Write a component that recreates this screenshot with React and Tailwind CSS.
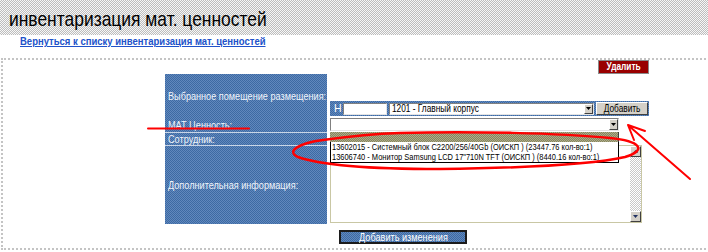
import React from "react";

// dithered backgrounds, the old screenshot is all 1px checker patterns
const gray = "bg-[image:repeating-conic-gradient(#bdbdbd_0_25%,#f7f7f7_0_50%)] bg-[length:2px_2px]";
const blue = "bg-[image:repeating-conic-gradient(#3d6aa3_0_25%,#6188bd_0_50%)] bg-[length:2px_2px]";
const olive = "bg-[image:repeating-conic-gradient(#86855e_0_25%,#aeac8a_0_50%)] bg-[length:2px_2px]";
const track = "bg-[image:repeating-conic-gradient(#c8c8c8_0_25%,#ffffff_0_50%)] bg-[length:2px_2px]";

// the screenshot is squeezed sideways, so text is narrowed to match
function Narrow({ children, className = "" }) {
  return <span className={`inline-block whitespace-nowrap origin-left scale-x-[0.83] ${className}`}>{children}</span>;
}

function DropArrow() {
  return (
    <span className="flex w-[9px] h-full items-center justify-center bg-[#d4d0c8] border border-t-white border-l-white border-b-[#404040] border-r-[#404040]">
      <svg width="5" height="3" viewBox="0 0 5 3">
        <path d="M0 0h5L2.5 3z" fill="#000" />
      </svg>
    </span>
  );
}

function Select({ className, children }) {
  return (
    <div className={`flex bg-white border border-t-[#808080] border-l-[#808080] border-b-[#e4e4e4] border-r-[#e4e4e4] ${className}`}>
      <span className="flex-1 pl-[2px] text-[10px] leading-[10px] text-black overflow-hidden">
        {children && <Narrow>{children}</Narrow>}
      </span>
      <DropArrow />
    </div>
  );
}

function ScrollBtn({ up }) {
  return (
    <span className="flex h-[11px] items-center justify-center bg-[#d4d0c8] border border-t-white border-l-white border-b-[#404040] border-r-[#404040]">
      <svg width="5" height="3" viewBox="0 0 5 3">
        <path d={up ? "M0 3h5L2.5 0z" : "M0 0h5L2.5 3z"} fill="#203060" />
      </svg>
    </span>
  );
}

export default function App() {
  return (
    <div className="relative w-[708px] h-[252px] overflow-hidden bg-white font-['Liberation_Sans',Arial,sans-serif]">
      <div className={`h-[35px] pl-[9px] pt-[8px] ${gray}`}>
        <div className="text-[21px] leading-none text-black">
          <Narrow>инвентаризация мат. ценностей</Narrow>
        </div>
      </div>
      <div className="h-[23px] pl-[20px] pt-[2px] text-[10px] leading-[10px]">
        <a href="#" className="inline-block whitespace-nowrap origin-left scale-x-[0.95] font-bold text-[#2152c9] underline">
          Вернуться к списку инвентаризация мат. ценностей
        </a>
      </div>

      <div className="ml-[1px] w-[820px] h-[192px] border-2 border-r-0 border-dotted border-[#c4c4c4]">
        <div className="ml-[162px] w-[484px]">
          <div className="flex justify-end h-[14px]">
            <button className="w-[51px] h-[14px] bg-[#990000] border border-[#8a8a8a] text-white text-[10px] font-bold leading-none">
              <span className="inline-block scale-x-[0.83]">Удалить</span>
            </button>
          </div>

          <div className="flex gap-[3px]">
            <div className={`w-[162px] flex flex-col text-[11px] leading-none text-[#f0f4fa] ${blue}`}>
              <div className="h-[44px] flex items-center pl-[3px]">
                <Narrow>Выбранное помещение размещения:</Narrow>
              </div>
              <div className="h-[14px] flex items-center pl-[3px]">
                <Narrow>МАТ Ценность:</Narrow>
              </div>
              <div className="h-px bg-[#c9d5e6]" />
              <div className="h-[12px] flex items-center pl-[3px]">
                <Narrow>Сотрудник:</Narrow>
              </div>
              <div className="h-px bg-[#c9d5e6]" />
              <div className="h-[78px] flex items-center pl-[3px]">
                <Narrow>Дополнительная информация:</Narrow>
              </div>
            </div>

            <div className="relative w-[319px] flex flex-col">
              <div className={`mt-[27px] h-[15px] flex items-center ${blue}`}>
                <span className="w-[13px] pl-[4px] text-white text-[10.5px] leading-none">Н</span>
                <span className="w-[44px] h-[12px] bg-white border border-t-[#808080] border-l-[#808080] border-b-[#e4e4e4] border-r-[#e4e4e4]" />
                <Select className="ml-[2px] w-[205px] h-[12px]">1201 - Главный корпус</Select>
                <button className="ml-[2px] w-[52px] h-[13px] bg-[#d4d0c8] border border-t-white border-l-white border-b-[#404040] border-r-[#404040] text-[10px] leading-none text-black">
                  <span className="inline-block scale-x-[0.83]">Добавить</span>
                </button>
              </div>
              <Select className="mt-[2px] w-[289px] h-[13px]" />
              <div className={`mt-px w-[289px] h-[10px] border-r border-[#404040] ${olive}`} />
              <div className="mt-[3px] w-[312px] h-[78px] flex bg-white border border-[#c9c7a4]">
                <div className="flex-1" />
                <div className={`w-[11px] flex flex-col justify-between ${track}`}>
                  <ScrollBtn up />
                  <ScrollBtn />
                </div>
              </div>

              <div className="absolute left-0 top-[68px] w-[289px] h-[21px] bg-white border border-t-0 border-black pl-px text-[9px] leading-[10px] text-black overflow-hidden">
                <div>
                  <Narrow>13602015 - Системный блок C2200/256/40Gb (ОИСКП ) (23447.76 кол-во:1)</Narrow>
                </div>
                <div>
                  <Narrow>13606740 - Монитор Samsung LCD 17"710N TFT (ОИСКП ) (8440.16 кол-во:1)</Narrow>
                </div>
              </div>
            </div>
          </div>

          <button className={`mt-[5px] ml-[174px] w-[128px] h-[14px] border-2 border-[#1c1c1c] text-white text-[11px] leading-none ${blue}`}>
            <span className="inline-block whitespace-nowrap scale-x-[0.83]">Добавить изменения</span>
          </button>
        </div>
      </div>

      {/* red pen marks drawn over the screenshot */}
      <svg className="absolute inset-0 pointer-events-none" width="708" height="252" viewBox="0 0 708 252" fill="none" stroke="#f00" strokeLinecap="round">
        <path d="M148 128.5H249" strokeWidth="2" />
        <path
          d="M400 133C470 131 560 133 610 138C640 141 648 150 625 157C590 165 520 168 440 169C370 169 320 165 298 157C285 151 300 143 323 140C345 137 370 134 400 133Z"
          strokeWidth="2.5"
        />
        <path d="M690 179L629 126M628 125L645 131M628 125L634 140" strokeWidth="2" />
      </svg>
    </div>
  );
}
